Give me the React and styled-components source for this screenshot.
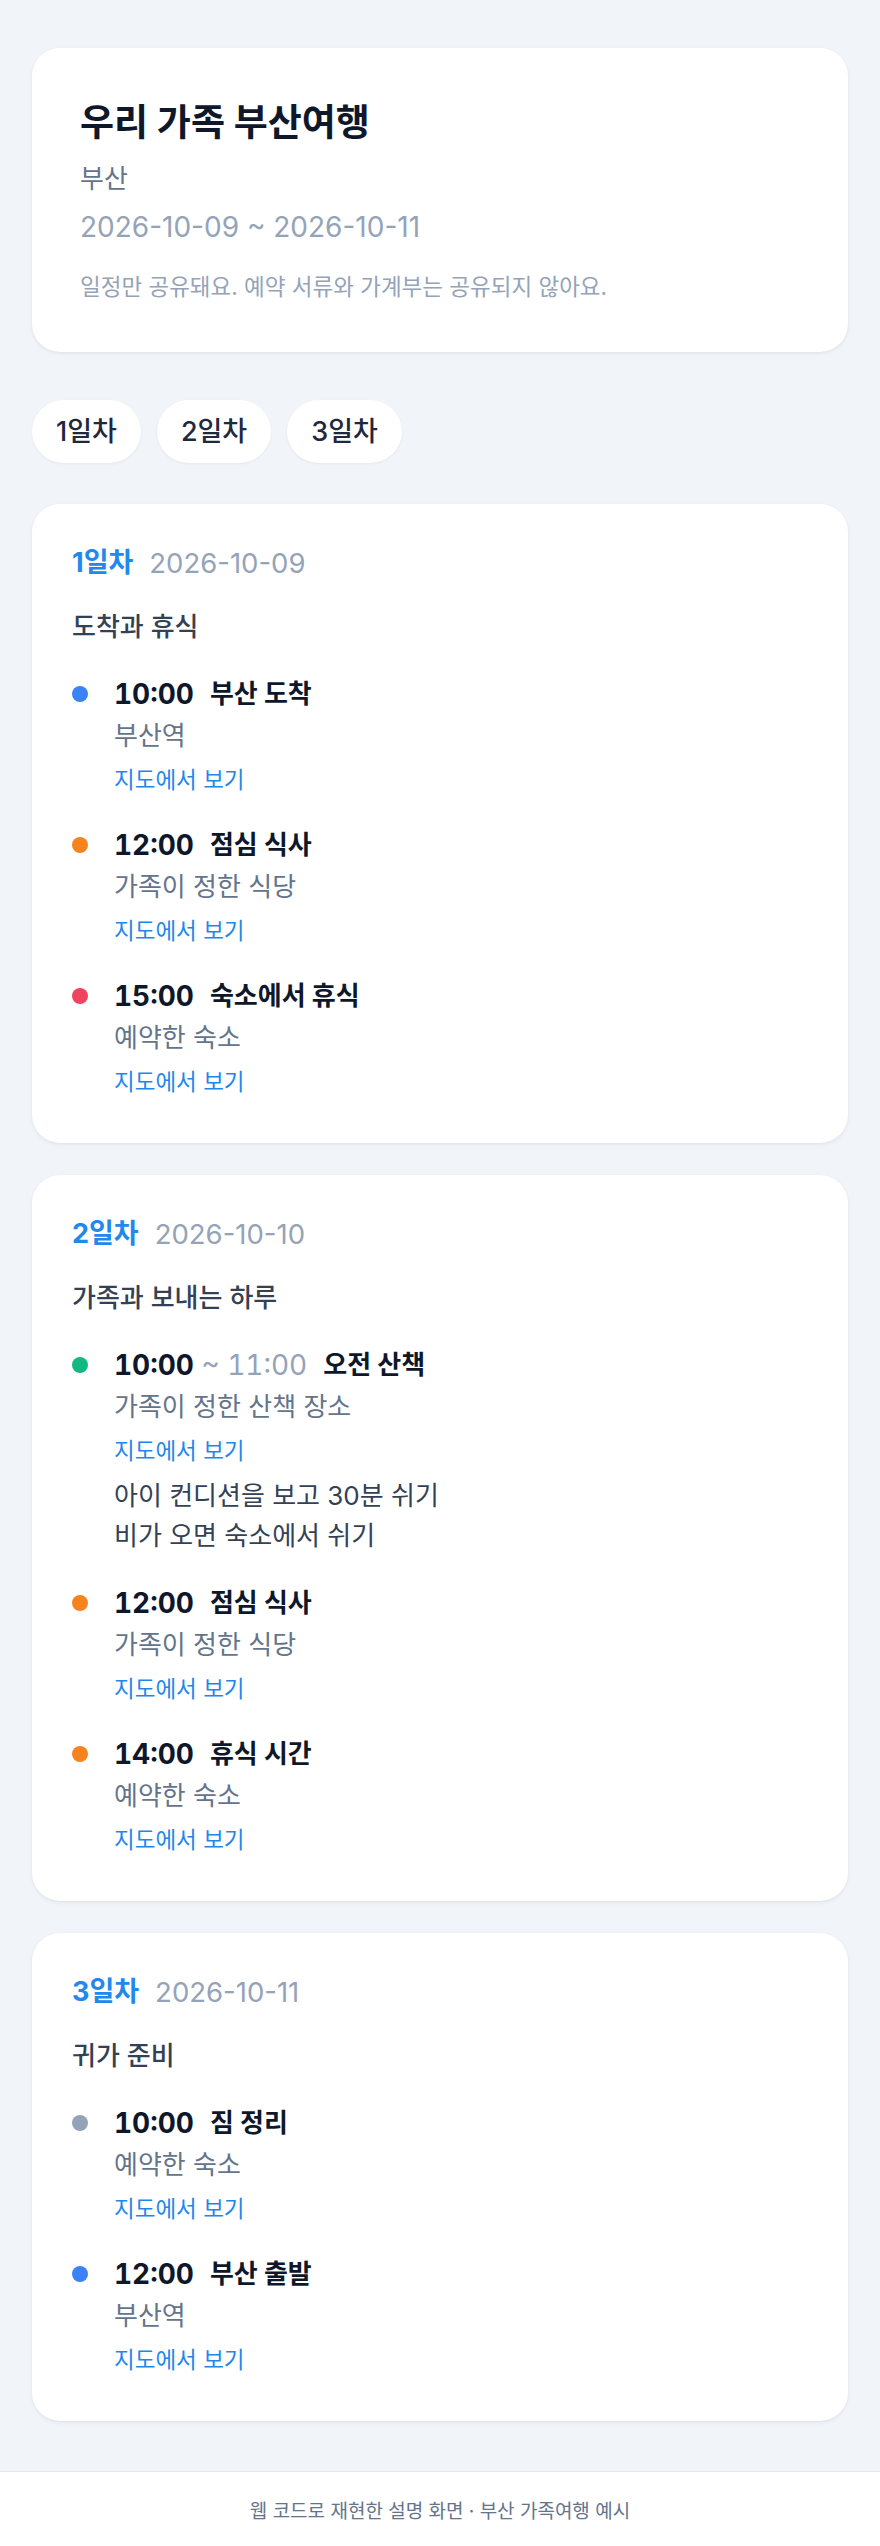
import React from "react";
import styled, { createGlobalStyle } from "styled-components";

const GlobalStyle = createGlobalStyle`
  html, body {
    margin: 0;
    padding: 0;
    background: #f1f4f8;
  }
  body {
    font-family: Inter, "Noto Sans CJK KR", sans-serif;
    color: #0f172a;
    -webkit-font-smoothing: antialiased;
  }
  * { box-sizing: border-box; }
`;

const Page = styled.div`
  display: flex;
  flex-direction: column;
  min-height: 100vh;
`;

const Main = styled.main`
  flex: 1;
  display: flex;
  flex-direction: column;
  padding: 48px 32px 50px;
`;

const Card = styled.section`
  background: #ffffff;
  border-radius: 28px;
  box-shadow: 0 1px 3px rgba(15, 23, 42, 0.06), 0 2px 6px rgba(15, 23, 42, 0.03);
`;

const TripCard = styled(Card)`
  padding: 53px 48px 49px;
  display: flex;
  flex-direction: column;
`;

const TripTitle = styled.h1`
  margin: 0;
  font-size: 37px;
  line-height: 44px;
  font-weight: 700;
  color: #0f172a;
`;

const TripCity = styled.div`
  margin-top: 16px;
  font-size: 26px;
  line-height: 36px;
  color: #64748b;
`;

const TripDates = styled.div`
  margin-top: 12px;
  font-size: 28px;
  line-height: 36px;
  color: #94a3b8;
`;

const TripNote = styled.p`
  margin: 26px 0 0;
  font-size: 22.5px;
  line-height: 32px;
  color: #94a3b8;
`;

const Tabs = styled.nav`
  display: flex;
  gap: 16px;
  margin: 48px 0 41px;
`;

const Tab = styled.button`
  border: none;
  background: #ffffff;
  border-radius: 999px;
  padding: 12px 24px;
  font-family: inherit;
  font-size: 27px;
  line-height: 39px;
  font-weight: 500;
  color: #1e293b;
  box-shadow: 0 1px 3px rgba(15, 23, 42, 0.06);
  cursor: pointer;
`;

const DayList = styled.div`
  display: flex;
  flex-direction: column;
  gap: 32px;
`;

const DayCard = styled(Card)`
  padding: 40px 40px 43px;
  display: flex;
  flex-direction: column;
`;

const DayHead = styled.div`
  display: flex;
  align-items: center;
  gap: 16px;
  line-height: 38px;
`;

const DayLabel = styled.span`
  font-size: 27px;
  font-weight: 700;
  color: #2188ec;
`;

const DayDate = styled.span`
  font-size: 27.5px;
  color: #94a3b8;
`;

const DayTheme = styled.div`
  margin-top: 27px;
  font-size: 26px;
  line-height: 36px;
  font-weight: 500;
  color: #334155;
`;

const Items = styled.ul`
  list-style: none;
  margin: 29px 0 0;
  padding: 0;
  display: flex;
  flex-direction: column;
  gap: 27px;
`;

const Item = styled.li`
  display: grid;
  grid-template-columns: 16px 1fr;
  column-gap: 26px;
`;

const Dot = styled.span`
  width: 16px;
  height: 16px;
  border-radius: 50%;
  margin-top: 12px;
  background: ${(p) => p.$color};
`;

const ItemBody = styled.div`
  display: flex;
  flex-direction: column;
`;

const ItemHead = styled.div`
  display: flex;
  align-items: center;
  gap: 16px;
  height: 40px;
  line-height: 40px;
`;

const Time = styled.span`
  font-size: 28px;
  font-weight: 700;
  font-variant-numeric: tabular-nums;
  color: #0f172a;
  white-space: pre;
`;

const EndTime = styled.span`
  font-weight: 400;
  color: #94a3b8;
`;

const ItemTitle = styled.span`
  font-size: 26px;
  font-weight: 700;
  color: #0f172a;
`;

const Place = styled.div`
  margin-top: 4px;
  font-size: 26px;
  line-height: 36px;
  color: #64748b;
`;

const MapLink = styled.a`
  margin-top: 8px;
  font-size: 22.5px;
  line-height: 36px;
  color: #1f87ea;
  text-decoration: none;
  align-self: flex-start;
`;

const Notes = styled.div`
  margin-top: 7px;
  display: flex;
  flex-direction: column;
`;

const NoteLine = styled.div`
  font-size: 26px;
  line-height: 40px;
  color: #334155;
`;

const Footer = styled.footer`
  background: #ffffff;
  border-top: 1px solid #e2e8f0;
  padding: 24px 16px;
  text-align: center;
  font-size: 19px;
  line-height: 32px;
  color: #64748b;
`;

const COLORS = {
  blue: "#3b82f6",
  orange: "#f5841f",
  red: "#f0435f",
  green: "#10b981",
  gray: "#94a3b8",
};

const days = [
  {
    label: "1일차",
    date: "2026-10-09",
    theme: "도착과 휴식",
    items: [
      { time: "10:00", title: "부산 도착", place: "부산역", color: COLORS.blue },
      { time: "12:00", title: "점심 식사", place: "가족이 정한 식당", color: COLORS.orange },
      { time: "15:00", title: "숙소에서 휴식", place: "예약한 숙소", color: COLORS.red },
    ],
  },
  {
    label: "2일차",
    date: "2026-10-10",
    theme: "가족과 보내는 하루",
    items: [
      {
        time: "10:00",
        end: "11:00",
        title: "오전 산책",
        place: "가족이 정한 산책 장소",
        color: COLORS.green,
        notes: ["아이 컨디션을 보고 30분 쉬기", "비가 오면 숙소에서 쉬기"],
      },
      { time: "12:00", title: "점심 식사", place: "가족이 정한 식당", color: COLORS.orange },
      { time: "14:00", title: "휴식 시간", place: "예약한 숙소", color: COLORS.orange },
    ],
  },
  {
    label: "3일차",
    date: "2026-10-11",
    theme: "귀가 준비",
    items: [
      { time: "10:00", title: "짐 정리", place: "예약한 숙소", color: COLORS.gray },
      { time: "12:00", title: "부산 출발", place: "부산역", color: COLORS.blue },
    ],
  },
];

function ScheduleItem({ item }) {
  return (
    <Item>
      <Dot $color={item.color} />
      <ItemBody>
        <ItemHead>
          <Time>
            {item.time}
            {item.end && <EndTime>{` ~ ${item.end}`}</EndTime>}
          </Time>
          <ItemTitle>{item.title}</ItemTitle>
        </ItemHead>
        <Place>{item.place}</Place>
        <MapLink href="#">지도에서 보기</MapLink>
        {item.notes && (
          <Notes>
            {item.notes.map((n) => (
              <NoteLine key={n}>{n}</NoteLine>
            ))}
          </Notes>
        )}
      </ItemBody>
    </Item>
  );
}

export default function App() {
  return (
    <>
      <GlobalStyle />
      <Page>
        <Main>
          <TripCard>
            <TripTitle>우리 가족 부산여행</TripTitle>
            <TripCity>부산</TripCity>
            <TripDates>2026-10-09 ~ 2026-10-11</TripDates>
            <TripNote>일정만 공유돼요. 예약 서류와 가계부는 공유되지 않아요.</TripNote>
          </TripCard>

          <Tabs>
            {days.map((d) => (
              <Tab key={d.label}>{d.label}</Tab>
            ))}
          </Tabs>

          <DayList>
            {days.map((d) => (
              <DayCard key={d.label}>
                <DayHead>
                  <DayLabel>{d.label}</DayLabel>
                  <DayDate>{d.date}</DayDate>
                </DayHead>
                <DayTheme>{d.theme}</DayTheme>
                <Items>
                  {d.items.map((it) => (
                    <ScheduleItem key={it.time + it.title} item={it} />
                  ))}
                </Items>
              </DayCard>
            ))}
          </DayList>
        </Main>
        <Footer>웹 코드로 재현한 설명 화면 · 부산 가족여행 예시</Footer>
      </Page>
    </>
  );
}
